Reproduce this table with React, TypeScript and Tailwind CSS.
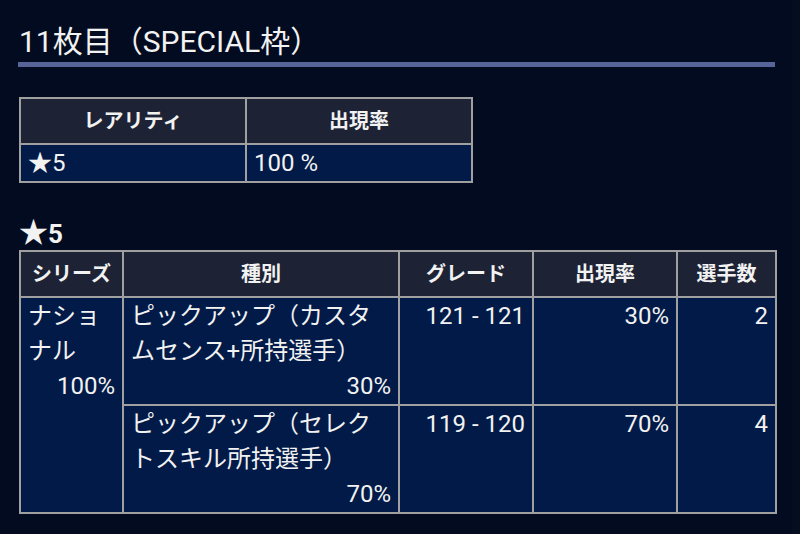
import React from "react";

const font = { fontFamily: 'Roboto, "Noto Sans CJK JP", sans-serif' };

export default function App() {
  const th =
    "border-2 border-[#a0a0a0] bg-[#1d2335] text-center font-bold text-[20px] leading-[34px] py-[5px] px-[7px]";
  const td =
    "border-2 border-[#a0a0a0] bg-[#011a47] text-[24px] leading-[35px] pt-px pb-0 px-[7px] align-top";
  return (
    <div
      className="w-[800px] min-h-[534px] bg-[#020b1f] text-[#f2f2f2] flex"
      style={font}
    >
      <div className="w-[792px] pl-[18px] pt-[22px] pb-[20px]">
        <h2 className="w-[757px] text-[30px] leading-[40px] font-normal border-b-[5px] border-[#56649a] pl-px">
          11枚目（SPECIAL枠）
        </h2>

        <table className="mt-[30px] ml-px w-[452px] border-collapse table-fixed">
          <colgroup>
            <col className="w-[226px]" />
            <col className="w-[226px]" />
          </colgroup>
          <thead>
            <tr>
              <th className={th}>レアリティ</th>
              <th className={th}>出現率</th>
            </tr>
          </thead>
          <tbody>
            <tr>
              <td className={td + " pt-[2px]"}>★5</td>
              <td className={td + " pt-[2px]"}>100 %</td>
            </tr>
          </tbody>
        </table>

        <h3 className="mt-[34px] ml-px text-[26px] leading-[32px] font-bold">
          <span className="text-[29px]">★</span>5
        </h3>

        <table className="ml-px w-[756px] border-collapse table-fixed">
          <colgroup>
            <col className="w-[103px]" />
            <col className="w-[276px]" />
            <col className="w-[134px]" />
            <col className="w-[144px]" />
            <col className="w-[99px]" />
          </colgroup>
          <thead>
            <tr>
              <th className={th}>シリーズ</th>
              <th className={th}>種別</th>
              <th className={th}>グレード</th>
              <th className={th}>出現率</th>
              <th className={th}>選手数</th>
            </tr>
          </thead>
          <tbody>
            <tr>
              <td className={td} rowSpan={2}>
                <div>ナショナル</div>
                <div className="text-right">100%</div>
              </td>
              <td className={td}>
                <div>ピックアップ（カスタムセンス+所持選手）</div>
                <div className="text-right">30%</div>
              </td>
              <td className={td + " text-right"}>121 - 121</td>
              <td className={td + " text-right"}>30%</td>
              <td className={td + " text-right"}>2</td>
            </tr>
            <tr>
              <td className={td}>
                <div>ピックアップ（セレクトスキル所持選手）</div>
                <div className="text-right">70%</div>
              </td>
              <td className={td + " text-right"}>119 - 120</td>
              <td className={td + " text-right"}>70%</td>
              <td className={td + " text-right"}>4</td>
            </tr>
          </tbody>
        </table>
      </div>
      <div className="w-[8px] bg-[#050e1f]" />
    </div>
  );
}
